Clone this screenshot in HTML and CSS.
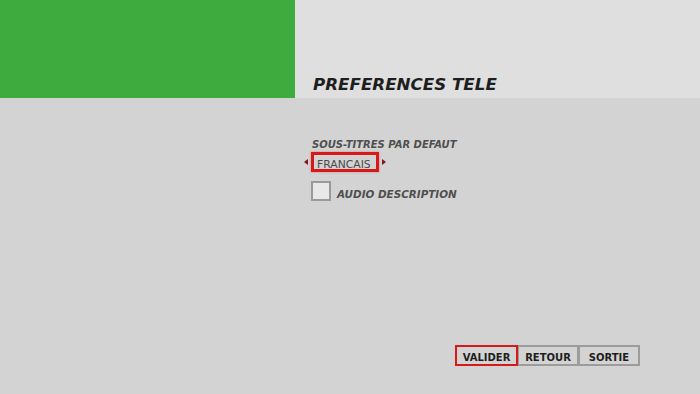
FILE: index.html
```html
<!DOCTYPE html>
<html>
<head>
<meta charset="utf-8">
<link rel="stylesheet" href="styles.css">
</head>
<body>
<div class="screen">
  <header class="header">
    <div class="brand"></div>
    <div class="band"><h1 class="title">PREFERENCES TELE</h1></div>
  </header>
  <main class="content">
    <div class="label">SOUS-TITRES PAR DEFAUT</div>
    <div class="selector">
      <span class="arrow arrow-left"></span>
      <span class="choice">FRANCAIS</span>
      <span class="arrow arrow-right"></span>
    </div>
    <div class="option">
      <span class="checkbox"></span>
      <span class="option-label">AUDIO DESCRIPTION</span>
    </div>
  </main>
  <footer class="footer">
    <span class="btn btn-active">VALIDER</span>
    <span class="btn">RETOUR</span>
    <span class="btn">SORTIE</span>
  </footer>
</div>
</body>
</html>
```

FILE: styles.css
```css
* { box-sizing: border-box; margin: 0; padding: 0; }
html, body { width: 700px; height: 394px; overflow: hidden; }
body { background: #d3d3d3; font-family: "DejaVu Sans", "Liberation Sans", sans-serif; }
.screen { width: 700px; height: 394px; display: flex; flex-direction: column; }
.header { display: grid; grid-template-columns: 295px 1fr; height: 98px; flex: none; }
.brand { background: #3dab3d; }
.band { background: #dfdfdf; display: flex; align-items: flex-end; padding: 0 0 4px 18px; }
.title { font-size: 16.7px; font-weight: bold; font-style: italic; color: #1e1e1e; line-height: 20px; }
.content { flex: 1; padding: 40px 0 0 311px; display: flex; flex-direction: column; align-items: flex-start; }
.label { font-size: 10px; font-weight: bold; font-style: italic; color: #4f4f4f; line-height: 13px; padding-left: 1px; }
.selector { display: flex; align-items: center; margin: 1px 0 0 -7px; }
.arrow { width: 0; height: 0; border-top: 3px solid transparent; border-bottom: 3px solid transparent; }
.arrow-left { border-right: 4px solid #7a1a1a; margin-right: 3px; }
.arrow-right { border-left: 4px solid #7a1a1a; margin-left: 3px; }
.choice { border: 3px solid #d61a1a; width: 68px; height: 20px; font-size: 10.8px; color: #4a4a4a; line-height: 20px; padding-left: 3px; overflow: hidden; white-space: nowrap; box-shadow: 0 0 2px rgba(230,40,40,0.5); }
.option { display: flex; align-items: flex-end; margin-top: 9px; }
.checkbox { width: 20px; height: 20px; border: 2px solid #9a9a9a; background: #e8e8e8; }
.option-label { margin-left: 6px; font-size: 10.4px; font-weight: bold; font-style: italic; color: #4f4f4f; line-height: 13px; padding-bottom: 0; }
.footer { flex: none; height: 49px; display: flex; justify-content: flex-end; align-items: flex-start; padding-right: 60px; }
.btn { height: 21px; width: 62px; border: 2px solid #9c9c9c; font-size: 10px; font-weight: bold; color: #1e1e1e; display: flex; align-items: center; justify-content: center; padding-top: 3px; }
.btn + .btn { margin-left: -1px; }
.btn-active { border-color: #d61a1a; width: 63px; position: relative; z-index: 1; }
```
